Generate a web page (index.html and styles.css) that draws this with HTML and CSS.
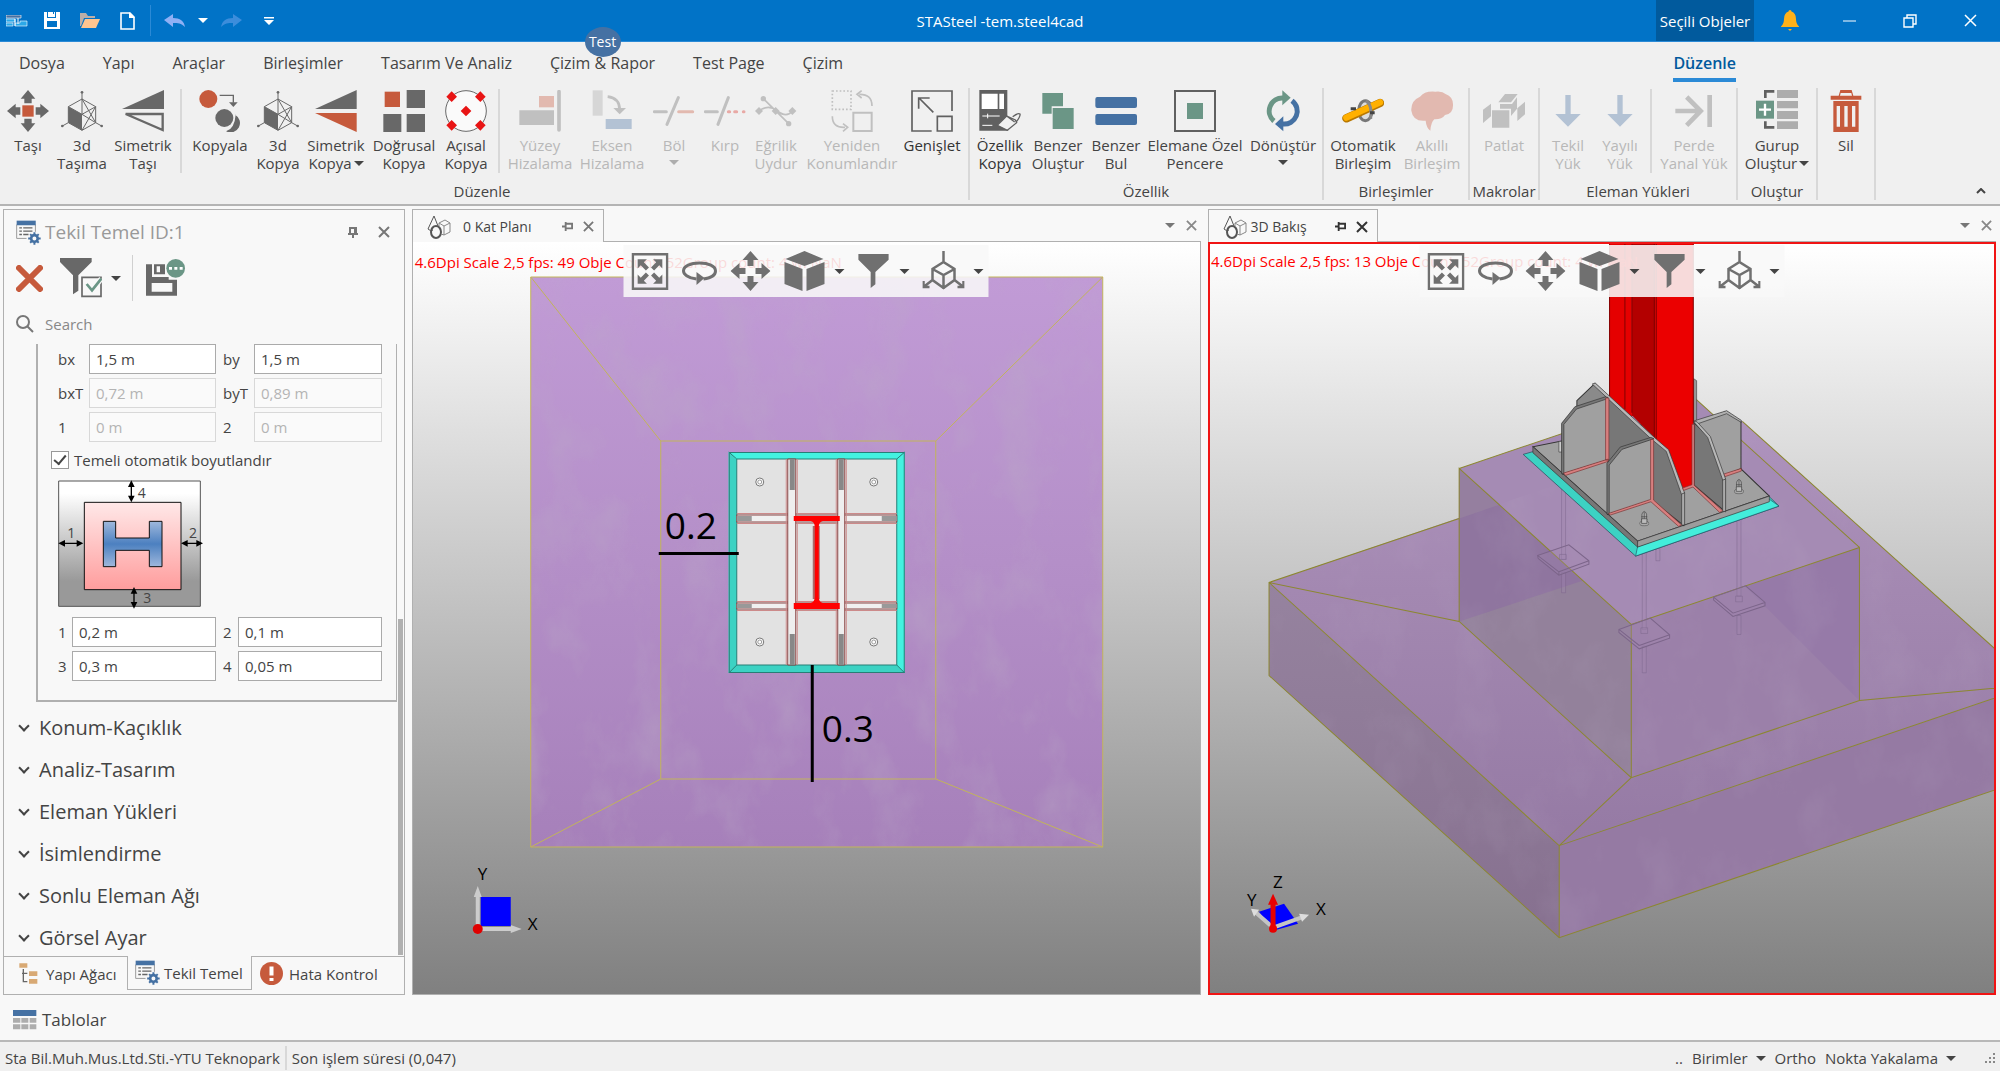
FILE: index.html
```html
<!DOCTYPE html>
<html lang="tr">
<head>
<meta charset="utf-8">
<title>STASteel -tem.steel4cad</title>
<link rel="stylesheet" href="styles.css">
</head>
<body>
<svg class="defs" aria-hidden="true">
  <defs>
    <symbol id="cube3d" viewBox="185 270 126 126">
      <g fill="none" stroke="#686868" stroke-width="3"><path d="M248 278V343M248 297l41 23v48l-41 23-41-23v-48zM207 320l41 23 41-23M248 343l41 25M289 320l-41 71M248 297l41 71M207 368l-18 10M289 368l18 10"/></g>
      <path d="M207 320l41 23v48l-41-23z" fill="#686868"/><g fill="#686868"><circle cx="248" cy="277" r="4"/><circle cx="189" cy="378" r="4"/><circle cx="307" cy="378" r="4"/></g>
    </symbol>
    <symbol id="x" viewBox="0 0 12 12"><path d="M1 1l10 10M11 1L1 11" fill="none" stroke="currentColor" stroke-width="2"/></symbol>
    <symbol id="pinside" viewBox="0 0 12 12"><path d="M0 6h4M4 1v10M4 3h7v5H4M4 8h8" fill="none" stroke="currentColor" stroke-width="2"/></symbol>
    <symbol id="shapes" viewBox="0 0 24 24"><g fill="none" stroke="#555"><path d="M7 1L1 14q3 3 5 1M7 1l4 10"/><ellipse cx="9" cy="17" rx="5" ry="6" stroke-width="2"/><path d="M12 8l6-3 5 3v9l-6 3-3-1M12 8l5 3v9M17 11l6-3M12 8v3" stroke="#888"/></g></symbol>
    <symbol id="sheetgear" viewBox="46 40 76 76">
      <path d="M48 54v42h30M105 54v22" fill="none" stroke="#999" stroke-width="3"/><path d="M48 42h58v14H48z" fill="#4571a3"/>
      <path d="M56 64h8m4 0h28M56 74h8m4 0h28M56 84h8m4 0h16" stroke="#666" stroke-width="4"/>
      <circle cx="102" cy="96" r="10" fill="none" stroke="#4571a3" stroke-width="8"/><path d="M102 77v8m0 22v8M83 96h8m22 0h8M89 83l6 6m14 14l6 6M115 83l-6 6m-14 14l-6 6" stroke="#4571a3" stroke-width="6"/>
    </symbol>
    <symbol id="fit" viewBox="0 0 36 36"><path d="M1 1h34v34H1z" fill="none" stroke="currentColor" stroke-width="3"/><path id="fa" d="M6 6h9l-3 3 5 5-3 3-5-5-3 3z" fill="currentColor"/><use href="#fa" transform="matrix(-1 0 0 1 36 0)"/><use href="#fa" transform="matrix(1 0 0 -1 0 36)"/><use href="#fa" transform="matrix(-1 0 0 -1 36 36)"/></symbol>
    <symbol id="orbit" viewBox="0 0 36 36"><path d="M15 26C6 25 2 21 2 18c0-5 7-8 16-8s16 3 16 8c0 4-5 7-12 8" fill="none" stroke="currentColor" stroke-width="3"/><path d="M15 19l8 6-8 7z" fill="currentColor"/></symbol>
    <symbol id="pan" viewBox="0 0 40 40"><path d="M20 0l8 9h-5v6h-6V9h-5zM20 40l8-9h-5v-6h-6v6h-5zM0 20l9-8v5h6v6H9v5zM40 20l-9-8v5h-6v6h6v5z" fill="currentColor"/></symbol>
    <symbol id="cube" viewBox="0 0 42 42"><path d="M21 1l19 8-19 7L2 9zM1 12l18 7v22L1 34zM41 12l-18 7v22l18-7z" fill="currentColor"/></symbol>
    <symbol id="funnel" viewBox="0 0 36 36"><path d="M2 0h32v6L20 19v13l-5 4V19L2 6z" fill="currentColor"/></symbol>
    <symbol id="axes" viewBox="0 0 42 40"><path d="M21 0v11l11 7v11l-11 8-11-8V18l11-7M10 18l11 6 11-6M21 24v14M10 29l-9 7M1 30v6h6M32 29l9 7M41 30v6h-6" fill="none" stroke="currentColor" stroke-width="2.500"/></symbol>
    <symbol id="bolt" viewBox="0 0 30 50"><path d="M8 12q7-16 14 0v22H8z" fill="#aaa" stroke="#444" stroke-width="2"/><path d="M6 20h18M6 28h18M15 6v28" stroke="#444" stroke-width="2"/><ellipse cx="15" cy="40" rx="14" ry="7" fill="#aaa" stroke="#555" stroke-width="2"/><path d="M7 26h16v14H7z" fill="#bbb" stroke="#444" stroke-width="2"/></symbol>
    <filter id="concrete" x="0" y="0" width="1" height="1"><feTurbulence type="fractalNoise" baseFrequency="0.022 0.014" numOctaves="5" seed="8"/><feColorMatrix values="0 0 0 0 .5  0 0 0 0 .42  0 0 0 0 .56  0 0 0 1.300 -.6"/><feComposite in2="SourceGraphic" operator="in"/></filter>
  </defs>
</svg>

<header class="titlebar">
  <nav class="quick" aria-label="Hızlı erişim">
    <svg width="22" height="12" viewBox="0 0 22 12"><path d="M0 0h15v3H0z" fill="#4571a3" stroke="#fff" stroke-width=".6"/><path d="M0 4h9v3H0zM0 8h7v3H0zM14 6h7v5H9V8h5z" fill="#2ba8e8" stroke="#fff" stroke-width=".6"/><path d="M9 4v7M12 3v6" stroke="#fff"/></svg>
    <button class="q1" aria-label="Kaydet"><svg width="16" height="17" viewBox="0 0 16 17"><path d="M0 0h3v6h9V0h4v17H0zM4 0h5v2h1V0h1v5H4zM3 9v6h10V9z" fill="#fff" fill-rule="evenodd"/></svg></button>
    <button class="q2" aria-label="Aç"><svg width="20" height="15" viewBox="0 0 20 15"><path d="M0 0h6l2 3h7v2H4L1 13H0z" fill="#bbaea8"/><path d="M5 6h15l-4 9H1z" fill="#ffc590"/></svg></button>
    <button class="q2" aria-label="Yeni"><svg width="15" height="18" viewBox="0 0 15 18"><path d="M1 1h9l4 4v12H1z" fill="none" stroke="#fff" stroke-width="1.600"/><path d="M9 0v6h6z" fill="#fff"/></svg></button>
    <i class="qsep"></i>
    <button class="q3" aria-label="Geri al"><svg width="21" height="14" viewBox="0 0 21 14"><path d="M0 6l9-6v4c7 0 11 3 12 9-4-4-7-4-12-4v4z" fill="#8fb0f5"/></svg></button>
    <i class="caret light"></i>
    <button class="q4" aria-label="Yinele"><svg width="21" height="14" viewBox="0 0 21 14"><path d="M21 6L12 0v4C5 4 1 7 0 13c4-4 7-4 12-4v4z" fill="#3c8ddb"/></svg></button>
    <button aria-label="Özelleştir"><svg width="10" height="8" viewBox="0 0 10 8"><path d="M0 0h10v1.500H0zM0 3h10L5 8z" fill="#fff"/></svg></button>
  </nav>
  <h1 class="apptitle">STASteel -tem.steel4cad</h1>
  <div class="winctl">
    <span class="context">Seçili Objeler</span>
    <button class="bell" aria-label="Bildirimler"><svg width="18" height="21" viewBox="0 0 18 21"><path d="M9 0q1.500 0 1.500 1.500Q15 3 15 9q0 5 3 7.500V17H0v-.5Q3 14 3 9q0-6 4.500-7.500Q7.500 0 9 0zM7 19h4l-2 2z" fill="#ffb11a"/></svg></button>
    <button aria-label="Küçült"><svg width="14" height="14"><path d="M0 7h13" stroke="#fff"/></svg></button>
    <button aria-label="Geri yükle"><svg width="14" height="14" fill="none" stroke="#fff" stroke-width="1.400"><path d="M1 4h9v9H1zM4 4V1h9v9h-3"/></svg></button>
    <button aria-label="Kapat"><svg width="13" height="13" fill="none" stroke="#fff" stroke-width="1.500"><path d="M1 1l11 11M12 1L1 12"/></svg></button>
  </div>
</header>

<nav class="menu">
  <a href="#">Dosya</a><a href="#">Yapı</a><a href="#">Araçlar</a><a href="#">Birleşimler</a><a href="#">Tasarım Ve Analiz</a>
  <a href="#" class="hasbadge">Çizim &amp; Rapor<span class="badge">Test</span></a><a href="#">Test Page</a><a href="#">Çizim</a>
  <a href="#" class="current">Düzenle</a>
</nav>

<section class="ribbon">
  <div class="group">
    <div class="tools">
      <button class="tool w54"><svg viewBox="23 270 126 126"><path d="M86 270l22 26H97v14H75v-14H64zM86 396l22-26H97v-14H75v14H64zM23 333l26-22v11h14v22H49v11zM149 333l-26-22v11h-14v22h14v11z" fill="#686868"/><path d="M69 316h34v34H69z" fill="#c65a3c"/></svg>Taşı</button>
      <button class="tool w54"><svg><use href="#cube3d"/></svg>3d<br>Taşıma</button>
      <button class="tool w68"><svg viewBox="369 270 126 126"><path d="M495 270v57H369z" fill="#686868"/><path d="M380 342h111v48z" fill="none" stroke="#686868" stroke-width="7"/></svg>Simetrik<br>Taşı</button>
      <i class="split"></i>
      <button class="tool w70"><svg viewBox="600 270 126 126"><circle cx="628" cy="297" r="27" fill="#c65a3c"/><path d="M662 286h41v22" fill="none" stroke="#686868" stroke-width="4"/><path d="M690 307h26l-13 14z" fill="#686868"/><circle cx="676" cy="354" r="27" fill="#686868"/><path d="M708 344a27 27 0 1 1-27 50q26-8 29-50z" fill="#686868"/></svg>Kopyala</button>
      <button class="tool w46"><svg><use href="#cube3d"/></svg>3d<br>Kopya</button>
      <button class="tool w70"><svg viewBox="950 270 126 126"><path d="M1075 270v57H950z" fill="#686868"/><path d="M1075 396v-57H950z" fill="#c65a3c"/></svg>Simetrik<br><span>Kopya<i class="caret"></i></span></button>
      <button class="tool w66"><svg viewBox="1154 270 126 126"><path d="M1159 275h46v46h-46z" fill="#c65a3c"/><path d="M1225 270h55v54h-55zM1155 342h54v54h-54zM1225 342h55v54h-55z" fill="#686868"/></svg>Doğrusal<br>Kopya</button>
      <button class="tool w58"><svg viewBox="1338 270 126 126"><circle cx="1401" cy="333" r="61" fill="#fafafa" stroke="#686868" stroke-width="3"/><path d="M1401 317l16 16-16 16-16-16zM1358 274l16 16-16 16-16-16zM1444 274l16 16-16 16-16-16zM1358 360l16 16-16 16-16-16zM1444 360l16 16-16 16-16-16z" fill="#e81414"/></svg>Açısal<br>Kopya</button>
      <i class="split"></i>
      <button class="tool w74" disabled><svg viewBox="93 270 126 126"><path d="M153 288h45v34h-45z" fill="#e2b9af"/><path d="M94 331h104v44H94z" fill="#c0c0c0"/><path d="M213 275v115" stroke="#c0c0c0" stroke-width="11" stroke-linecap="round"/></svg>Yüzey<br>Hizalama</button>
      <button class="tool w70" disabled><svg viewBox="307 270 126 126"><path d="M312 271h30v76h-30z" fill="#d6d6d6"/><path d="M351 357h78v30h-78z" fill="#b3c2d4"/><path d="M357 290q36 4 36 40" fill="none" stroke="#c0c0c0" stroke-width="8"/><path d="M374 324h38l-19 19z" fill="#c0c0c0"/></svg>Eksen<br>Hizalama</button>
      <button class="tool w54" disabled><svg viewBox="495 270 126 126" stroke-linecap="round" stroke-width="9"><path d="M499 335h36M537 373l34-80" stroke="#c0c0c0"/><path d="M572 335h42" stroke="#e2b9af"/></svg>Böl<br><i class="caret below"></i></button>
      <button class="tool w48" disabled><svg viewBox="648 270 126 126" stroke-linecap="round" stroke-width="9"><path d="M652 335h36M690 373l31-80" stroke="#c0c0c0"/><path d="M721 335h4m15 0h6m20 0h2" stroke="#e8a9a5"/></svg>Kırp</button>
      <button class="tool w54" disabled><svg viewBox="800 270 126 126"><path d="M812 333q28-22 55 0 28 22 45 0M825 296l76 75" fill="none" stroke="#c0c0c0" stroke-width="5"/><path d="M812 321l12 12-12 12-12-12zM912 321l12 12-12 12-12-12zM862 321l12 12-12 12-12-12z" fill="#c0c0c0"/><circle cx="825" cy="296" r="8" fill="#c0c0c0"/><circle cx="901" cy="371" r="8" fill="#c0c0c0"/></svg>Eğrilik<br>Uydur</button>
      <button class="tool w98" disabled><svg viewBox="1022 270 126 126" fill="none" stroke="#c0c0c0"><path d="M1026 273h56v55h-56z" stroke-width="5" stroke-dasharray="5 6"/><path d="M1089 338h55v55h-55z" stroke-width="6"/><path d="M1145 318q0-36-38-35M1114 272l-14 11 14 11M1026 349q0 35 38 33M1058 371l14 11-14 12" stroke-width="5"/></svg>Yeniden<br>Konumlandır</button>
      <button class="tool w62 strong"><svg viewBox="1266 270 126 126" fill="none" stroke="#606060" stroke-width="5"><path d="M1328 393h-59V273h120v60M1345 349h44v44h-44zM1333 337l-43-43M1289 326v-32h33"/></svg>Genişlet</button>
    </div>
    <h2>Düzenle</h2>
  </div>
  <div class="group">
    <div class="tools">
      <button class="tool w54 strong"><svg viewBox="29 270 126 126"><path d="M30 270h84v80l-22 24 26 18H30z" fill="#606060"/><path d="M37 281h48v46H37zM90 281h14v46H90z" fill="#fff"/><path d="M39 348h52M55 341v14M39 376h30" stroke="#fff" stroke-width="3"/><path d="M84 376l28-28 26 12 4 8-28 23zM112 348l24 18M130 350q16-12 22-8 2 6-10 22" fill="#f0f0f0" stroke="#606060" stroke-width="4"/></svg>Özellik<br>Kopya</button>
      <button class="tool w62"><svg viewBox="201 270 126 126"><path d="M217 279h62v40h-34v22h-28zM248 324h63v63h-63z" fill="#6b9686"/></svg>Benzer<br>Oluştur</button>
      <button class="tool w54"><svg viewBox="374 270 126 126" fill="#4571a3"><rect x="375" y="291" width="125" height="33" rx="6"/><rect x="375" y="342" width="125" height="33" rx="6"/></svg>Benzer<br>Bul</button>
      <button class="tool w104"><svg viewBox="612 270 126 126"><path d="M615 273h120v120H615z" fill="none" stroke="#606060" stroke-width="6"/><path d="M651 309h48v48h-48z" fill="#6b9686"/></svg>Elemane Özel<br>Pencere</button>
      <button class="tool w72"><svg viewBox="875 270 126 126" fill="none" stroke-width="15"><path d="M911 363a39 39 0 0 1 28-69" stroke="#6b9686"/><path d="M936 271l25 22-25 23z" fill="#6b9686" stroke="none"/><path d="M965 302a39 39 0 0 1-28 70" stroke="#4571a3"/><path d="M939 349l-25 23 25 22z" fill="#4571a3" stroke="none"/></svg>Dönüştür<br><i class="caret below"></i></button>
    </div>
    <h2>Özellik</h2>
  </div>
  <div class="group">
    <div class="tools">
      <button class="tool w72"><svg viewBox="1118 270 126 126"><ellipse cx="1188" cy="332" rx="20" ry="30" fill="#ddd" stroke="#777" stroke-width="9"/><path d="M1131 355l101-46" stroke="#b97800" stroke-width="25" stroke-linecap="round"/><path d="M1131 353l101-46" stroke="#ffb000" stroke-width="19" stroke-linecap="round"/><path d="M1190 302q20 14 14 54" fill="none" stroke="#888" stroke-width="9"/><path d="M1144 326h16M1202 338h14" stroke="#444" stroke-width="9"/></svg>Otomatik<br>Birleşim</button>
      <button class="tool w66" disabled><svg viewBox="1323 270 126 126"><path d="M1324 332q-2-30 26-42 14-18 46-15 20-3 32 8 22 8 21 34 0 24-24 28-10 14-32 13-10 8-12 34-12-8-14-30-38 4-43-30z" fill="#e2b9b0"/></svg>Akıllı<br>Birleşim</button>
    </div>
    <h2>Birleşimler</h2>
  </div>
  <div class="group">
    <div class="tools">
      <button class="tool w62" disabled><svg viewBox="6 270 126 126" fill="#c0c0c0"><path d="M33 331h52v52H33zM52 307l20-25h38l-20 25zM57 312h36l15-20v34l-18 22V326H57zM6 329l24-18v38l-24 20zM109 325l23-20v38l-23 20z"/></svg>Patlat</button>
    </div>
    <h2>Makrolar</h2>
  </div>
  <div class="group">
    <div class="tools">
      <button class="tool w50" disabled><svg viewBox="199 270 126 126"><path d="M254 285h16v57h30l-38 38-38-38h30z" fill="#b3c2d4"/></svg>Tekil<br>Yük</button>
      <button class="tool w54" disabled><svg viewBox="352 270 126 126"><path d="M407 285h16v57h30l-38 38-38-38h30z" fill="#b3c2d4"/></svg>Yayılı<br>Yük</button>
      <i class="split"></i>
      <button class="tool w78" disabled><svg viewBox="581 270 126 126" fill="none" stroke="#c0c0c0" stroke-width="14"><path d="M588 333h74M622 291l42 42-42 43M691 285v96"/></svg>Perde<br>Yanal Yük</button>
    </div>
    <h2>Eleman Yükleri</h2>
  </div>
  <div class="group">
    <div class="tools">
      <button class="tool w72"><svg viewBox="828 270 126 126"><path d="M883 274h-27v20M856 364v18h27" fill="none" stroke="#606060" stroke-width="8"/><path d="M891 270h63v24h-63zM891 303h63v22h-63zM891 333h63v24h-63zM891 364h63v23h-63z" fill="#adadad"/><path d="M828 302h54v54h-54z" fill="#6b9686"/><path d="M837 329h36M855 311v36" stroke="#fff" stroke-width="7"/></svg>Gurup<br><span>Oluştur<i class="caret"></i></span></button>
    </div>
    <h2>Oluştur</h2>
  </div>
  <div class="group">
    <div class="tools">
      <button class="tool w50"><svg viewBox="1036 270 126 126"><path d="M1053 287h24l5-17h34l5 17h24v12h-92zM1061 303h76v93h-76zM1083 279l-2 8h36l-2-8zM1071 318v62h10v-62zM1094 318v62h10v-62zM1117 318v62h10v-62z" fill="#c65a3c" fill-rule="evenodd"/></svg>Sil</button>
    </div>
  </div>
  <button class="collapse" aria-label="Şeridi daralt"><svg width="10" height="6"><path d="M1 5l4-4 4 4" fill="none" stroke="#444" stroke-width="2"/></svg></button>
</section>

<main class="dock">
  <aside class="props">
    <div class="phead">
      <svg width="25" height="25"><use href="#sheetgear"/></svg><h2>Tekil Temel ID:1</h2>
      <button aria-label="Sabitle"><svg width="10" height="11" viewBox="0 0 10 11" fill="none" stroke="#777" stroke-width="2"><path d="M2 0v7M2 1h6v6M7 1v6M0 7h10M5 7v4"/></svg></button>
      <button aria-label="Kapat"><svg width="12" height="12"><use href="#x"/></svg></button>
    </div>
    <div class="ptools">
      <button aria-label="İptal"><svg width="27" height="27" viewBox="0 0 27 27"><path d="M3 3l21 21M24 3L3 24" stroke="#c65a3c" stroke-width="6" stroke-linecap="round"/></svg></button>
      <button class="pf" aria-label="Filtre"><svg width="42" height="40" viewBox="180 162 126 120"><path d="M180 162h95v12l-40 40v46l-16 11v-57l-39-40z" fill="#686868"/><path d="M246 220h57v57h-57z" fill="#f8f8f8" stroke="#686868" stroke-width="5"/><path d="M260 240l16 19 28-35" fill="none" stroke="#f8f8f8" stroke-width="16"/><path d="M260 240l16 19 28-35" fill="none" stroke="#6b9686" stroke-width="8"/></svg><i class="caret"></i></button>
      <i class="psep"></i>
      <button aria-label="Farklı kaydet"><svg width="39" height="38" viewBox="438 162 117 114"><path d="M438 178h18v38h50v8h25v48h-93zM455 234v26h62v-26z" fill="#686868" fill-rule="evenodd"/><path d="M462 178h33v30h-33zM470 184v18h10v-18z" fill="#686868" fill-rule="evenodd"/><circle cx="527" cy="190" r="28" fill="#6b9686"/><path d="M507 190h9m7 0h9m7 0h9" stroke="#fff" stroke-width="8"/></svg></button>
    </div>
    <label class="search"><svg width="18" height="18" viewBox="0 0 18 18" fill="none" stroke="#777" stroke-width="2"><circle cx="7" cy="7" r="6"/><path d="M11 11l6 6"/></svg><input type="search" placeholder="Search"></label>
    <div class="pscroll">
      <div class="box">
        <div class="form wide">
          <label for="bx">bx</label><input id="bx" value="1,5 m"><label for="by">by</label><input id="by" value="1,5 m">
          <label for="bxt">bxT</label><input id="bxt" value="0,72 m" disabled><label for="byt">byT</label><input id="byt" value="0,89 m" disabled>
          <label for="o1">1</label><input id="o1" value="0 m" disabled><label for="o2">2</label><input id="o2" value="0 m" disabled>
        </div>
        <label class="check"><input type="checkbox" checked>Temeli otomatik boyutlandır</label>
        <svg class="sketch" width="146" height="130" viewBox="174 825 438 390">
          <defs><linearGradient id="g1" x1="0" y1="0" x2="0" y2="1"><stop offset=".1" stop-color="#fff"/><stop offset=".8" stop-color="#999"/></linearGradient><linearGradient id="g2" x1="0" y1="0" x2="0" y2="1"><stop offset="0" stop-color="#ffe8e8"/><stop offset="1" stop-color="#ff9d9d"/></linearGradient><linearGradient id="g3" x1="0" y1="0" x2="0" y2="1"><stop offset="0" stop-color="#9fb8dc"/><stop offset=".5" stop-color="#4c80c0"/><stop offset="1" stop-color="#9fb8dc"/></linearGradient></defs>
          <path d="M176 828h425v376H176z" fill="url(#g1)" stroke="#555" stroke-width="3"/><path d="M253 892h290v262H253z" fill="url(#g2)" stroke="#111" stroke-width="3"/>
          <path d="M310 949h37v50h101v-50h38v136h-38v-49H347v49h-37z" fill="url(#g3)" stroke="#111" stroke-width="3"/>
          <path d="M394 835v50M402 1155v48M185 1015h55M550 1015h50" stroke="#000" stroke-width="4"/><path d="M394 826l10 20h-20zM394 892l10-20h-20zM402 1146l10 20h-20zM402 1211l10-20h-20zM175 1015l20-10v20zM250 1015l-20-10v20zM543 1015l20-10v20zM609 1015l-20-10v20z"/>
          <g class="mark"><text x="202" y="998">1</text><text x="567" y="998">2</text><text x="413" y="880">4</text><text x="430" y="1193">3</text></g>
        </svg>
        <div class="form">
          <label for="d1">1</label><input id="d1" value="0,2 m"><label for="d2">2</label><input id="d2" value="0,1 m">
          <label for="d3">3</label><input id="d3" value="0,3 m"><label for="d4">4</label><input id="d4" value="0,05 m">
        </div>
      </div>
      <div class="sections">
        <button><i class="chev"></i>Konum-Kaçıklık</button><button><i class="chev"></i>Analiz-Tasarım</button><button><i class="chev"></i>Eleman Yükleri</button><button><i class="chev"></i>İsimlendirme</button><button><i class="chev"></i>Sonlu Eleman Ağı</button><button><i class="chev"></i>Görsel Ayar</button>
      </div>
      <i class="thumb"></i>
    </div>
    <div class="ptabs">
      <a href="#" class="pt1"><svg width="19" height="21" viewBox="56 818 57 63"><path d="M57 819h24v13H57zM86 843h25v14H86zM86 866h25v14H86z" fill="#d8a974"/><path d="M69 836v38h12M65 849h16" fill="none" stroke="#666" stroke-width="4"/></svg>Yapı Ağacı</a>
      <a href="#" class="pt2"><svg width="25" height="25"><use href="#sheetgear"/></svg>Tekil Temel</a>
      <a href="#" class="pt3"><svg width="23" height="23" viewBox="0 0 23 23"><circle cx="11.500" cy="11.500" r="11.500" fill="#c65a3c"/><path d="M11.500 4.500v9M11.500 16v3" stroke="#fff" stroke-width="4"/></svg>Hata Kontrol</a>
    </div>
  </aside>

  <section class="view">
    <div class="vhead">
      <div class="vtab plan"><svg width="24" height="24"><use href="#shapes"/></svg><span>0 Kat Planı</span><svg class="pin" width="11" height="11"><use href="#pinside"/></svg><svg width="11" height="11"><use href="#x"/></svg></div>
      <div class="vend"><i class="caret"></i><svg width="11" height="11"><use href="#x"/></svg></div>
    </div>
    <div class="canvas">
      <svg class="scene" viewBox="413 242 787 752" preserveAspectRatio="xMidYMid slice">
        <defs><linearGradient id="pl" x1="0" y1="0" x2="0" y2="1"><stop offset="0" stop-color="#c19bd6"/><stop offset=".5" stop-color="#b48fc8"/><stop offset="1" stop-color="#a680ba"/></linearGradient></defs>
        <path d="M531 277h572v570H531z" fill="url(#pl)"/><path d="M531 277h572v570H531z" filter="url(#concrete)" opacity=".6"/>
        <path d="M531 277h572v570H531zM661 441h275v338H661zM531 277l130 164M1103 277L936 441M531 847l130-68M1103 847l-167-68" fill="none" stroke="#c2b45a" stroke-width="1"/>
        <path d="M729 452h176v221H729z" fill="#43f2e0"/><path d="M729 452l8 8v205h160l8 8H729z" fill="#3cd2c3"/>
        <path d="M737 459h160v206H737z" fill="#e2e2e2"/>
        <path d="M729.500 452.500h175v220h-175zM737 459h160v206H737zM729 452l8 7M905 452l-8 7M729 673l8-8M905 673l-8-8" fill="none" stroke="#277e76"/>
        <path d="M737 515h160v7H737zM737 603h160v6H737z" fill="#f0f0f0" stroke="#844"/><path d="M737 513.500h160M737 523.500h160M737 601.500h160M737 610.500h160" stroke="#cc8a8a"/>
        <path d="M788 459h8v206h-8zM838 459h7v206h-7z" fill="#eee" stroke="#844"/><path d="M797.500 459v206M836.500 459v206M846.500 459v206M786.500 459v206" stroke="#cc8a8a"/>
        <path d="M790 459h5v31h-5zM839 459h5v31h-5zM790 634h5v31h-5zM839 634h5v31h-5z" fill="#888"/><path d="M737 516h15v5h-15zM882 516h15v5h-15zM737 604h15v4h-15zM882 604h15v4h-15z" fill="#999"/>
        <path d="M813 526h7v73h-7z" fill="#a86a6a"/><path d="M794 516h46v5h-17q-4 1-4 6v70q0 5 4 6h17v6h-46v-6h17q4-1 4-6v-70q0-5-4-6h-17z" fill="#f00"/>
        <g fill="#fff" stroke="#777"><circle cx="760" cy="482" r="4"/><circle cx="874" cy="482" r="4"/><circle cx="760" cy="642" r="4"/><circle cx="874" cy="642" r="4"/></g><g fill="none" stroke="#999"><circle cx="760" cy="482" r="2"/><circle cx="874" cy="482" r="2"/><circle cx="760" cy="642" r="2"/><circle cx="874" cy="642" r="2"/></g>
        <path d="M659 553.500h80M812.500 665v117" stroke="#000" stroke-width="3"/>
        <g class="dim"><text x="665" y="539">0.2</text><text x="822" y="742">0.3</text></g>
        <path d="M478 929v-33M478 929h34" stroke="#ccc" stroke-width="4"/><path d="M478 886l4 11h-8zM522 929l-11-4v8z" fill="#ccc"/><path d="M481 897h30v29h-30z" fill="#00f"/><circle cx="478" cy="929" r="5" fill="#e00000"/>
        <g class="axis"><text x="478" y="880">Y</text><text x="528" y="930">X</text></g>
        <text class="fps" x="415" y="268">4.6Dpi Scale 2,5 fps: 49 Obje Count: 52Group count: 4 w: NaN</text>
      </svg>
      <div class="float">
        <button aria-label="Sığdır"><svg width="37" height="37"><use href="#fit"/></svg></button>
        <button aria-label="Döndür"><svg width="36" height="36"><use href="#orbit"/></svg></button>
        <button aria-label="Kaydır"><svg width="40" height="40"><use href="#pan"/></svg></button>
        <button aria-label="Görünüm"><svg width="42" height="42"><use href="#cube"/></svg><i class="caret"></i></button>
        <button aria-label="Filtre"><svg width="34" height="36"><use href="#funnel"/></svg><i class="caret"></i></button>
        <button aria-label="Eksen"><svg width="42" height="40"><use href="#axes"/></svg><i class="caret"></i></button>
      </div>
    </div>
  </section>

  <section class="view active">
    <div class="vhead">
      <div class="vtab solid"><svg width="24" height="24"><use href="#shapes"/></svg><span>3D Bakış</span><svg class="pin" width="11" height="11"><use href="#pinside"/></svg><svg width="12" height="12"><use href="#x"/></svg></div>
      <div class="vend"><i class="caret"></i><svg width="11" height="11"><use href="#x"/></svg></div>
    </div>
    <div class="canvas">
      <svg class="scene" viewBox="1210 244 784 750" preserveAspectRatio="xMidYMid slice">
        <defs>
          <linearGradient id="s1" x1="0" y1="0" x2="0" y2="1"><stop offset="0" stop-color="#ae93bd"/><stop offset=".4" stop-color="#a388b1"/><stop offset="1" stop-color="#957aa4"/></linearGradient>
          <linearGradient id="s2" x1="0" y1="0" x2="0" y2="1"><stop offset="0" stop-color="#96839f"/><stop offset="1" stop-color="#86708f"/></linearGradient>
        </defs>
        <path d="M1269 583l473-161 292 263-475 161z" fill="url(#s1)"/>
        <path d="M1269 583v93l290 262v-92z" fill="url(#s2)"/>
        <path d="M1559 846v92l475-161v-92z" fill="#957aa3"/>
        <path d="M1459 469v153l172 156 228-78V548L1631 625z" fill="#9b80a9"/>
        <path d="M1459 469v153l172 156V625z" fill="#93819b"/>
        <path d="M1459 469v153l124-41v-24z" fill="#8f759f"/>
        <path d="M1859 548v153L1745 587z" fill="#967aa8"/>
        <path d="M1687 392l172 156-228 77-172-156z" fill="#a58bb4"/>
        <path d="M1459 519l41-14-41-36z" fill="#957f9f"/>
        <path d="M1269 583l473-161 292 263v92l-475 161-290-262z" filter="url(#concrete)" opacity=".25"/>
        <path d="M1459 519l-190 64v93l290 262 475-161M1269 583l290 263v92M1559 846l475-161-292-263M1269 583l190 39 172 156 228-77 175-16M1631 778l-72 68M1459 622V469l172 156v153M1631 625l228-77v153M1859 548l-172-156-228 77" fill="none" stroke="#8c8730"/>
        <!-- base plate, stiffeners and anchors, drawn three times larger -->
        <g transform="translate(1500 360) scale(.3333)">
          <g fill="#a388b1" fill-opacity=".3" stroke="#7c658a" stroke-opacity=".7" stroke-width="2">
            <path d="M184 340h12v260h-12zM184 640h12v60h-12zM426 570h12v240h-12zM426 860h12v80h-12zM710 480h12v230h-12zM710 768h12v57h-12zM467 560h12v44h-12z"/>
            <path d="M112 588l94-32 60 48v10l-90 33-62-50zM176 637l90-33M176 637v10M112 588l64 49M356 810l94-34 58 50v10l-91 32-61-49zM417 858l91-32M356 810l61 48M640 713l96-34 58 50v10l-96 32-58-49zM698 761l96-32M640 713l58 48" stroke-opacity="1" stroke-width="3"/>
            <path d="M178 585h20v15h-20zM422 805h20v17h-20zM706 710h20v17h-20z"/>
          </g>
          <path d="M69 285l28-8 315 272 394-138 30 29-430 150z" fill="#3cd2c3" stroke="#245" stroke-width="2"/><path d="M412 562l396-142 28 20-430 150z" fill="#43eddb" stroke="#256" stroke-width="2"/>
          <path d="M98 262l314 283 395-135-250-240z" fill="#a0a0a0" stroke="#333" stroke-width="3"/><path d="M98 262v18l314 283v-18z" fill="#777" stroke="#333" stroke-width="2"/><path d="M412 545v18l395-136v-17z" fill="#9c9c9c" stroke="#333" stroke-width="2"/>
          <path d="M176 246h10v32h-10z" fill="#ccc" stroke="#444" stroke-width="2"/>
          <path d="M580 58l9 6v160h-9z" fill="#999" stroke="#444" stroke-width="2"/>
          <path d="M590 188l88-32 44 30v142l-52 20-80-60z" fill="#a0a0a0" stroke="#333" stroke-width="3"/><path d="M580 185l99-31 44 29v6l-44-26-89 31z" fill="#b0b0b0" stroke="#333" stroke-width="2"/><path d="M670 344l53-17v8l-50 17z" fill="#d87f7f" stroke="#733" stroke-width="2"/>
          <path d="M327-380h68v600l-68-110z" fill="#e50000"/><path d="M395-380h72v620l-72-72z" fill="#b30000"/><path d="M465-380h114v760l-32 10-82-150z" fill="#eb0000"/><path d="M328-380v490M374-380v530M395-380v540M462-380v612M468-380v618M579-380v570" fill="none" stroke="#800000" stroke-width="3"/>
          <path d="M230 124l54-52 40 38-20 10-74 24z" fill="#8a8a8a" stroke="#333" stroke-width="3"/>
          <path d="M284 72l170 166 50 36 46 130v94L455 423 320 305V112z" fill="#777" stroke="#333" stroke-width="3"/>
          <path d="M276 74l9-3 176 162 44 38 48 130-9 5-46-130-46-38z" fill="#b8b8b8" stroke="#333" stroke-width="2"/><path d="M544 404l9-4v97h-9z" fill="#aaa" stroke="#333" stroke-width="2"/>
          <path d="M187 192l38-47 96-31v188l-134 42z" fill="#a0a0a0" stroke="#333" stroke-width="3"/><path d="M184 192l40-50 92-30 9 5-96 32-38 46v148h-7z" fill="#777" stroke="#333" stroke-width="2"/><path d="M316 116h10v186h-10zM190 341l134-42v7l-128 42z" fill="#d87f7f" stroke="#733" stroke-width="2"/>
          <path d="M322 316l40-49 92-29v184l-132 43z" fill="#a0a0a0" stroke="#333" stroke-width="3"/><path d="M320 312l40-49 92-29 9 4-96 32-38 47v147h-7z" fill="#777" stroke="#333" stroke-width="2"/><path d="M451 240h9v182l84 75-9 4-83-74-122 40-5-5 126-42z" fill="#d87f7f" stroke="#733" stroke-width="2"/>
          <path d="M583 192l45 42 46 130v92L582 378z" fill="#777" stroke="#333" stroke-width="3"/><path d="M580 187l10 0 40 44 46 128-8 5-46-130z" fill="#b8b8b8" stroke="#333" stroke-width="2"/><path d="M667 362l9-3v97h-9z" fill="#aaa" stroke="#333" stroke-width="2"/>
          <path d="M575 195h7v183l85 76-9 5-80-76-28 10-3-7 28-10z" fill="#d87f7f" stroke="#733" stroke-width="2"/>
          <use href="#bolt" x="417" y="452" width="30" height="50"/><use href="#bolt" x="701" y="356" width="30" height="50"/>
        </g>
        <path d="M1259 912l25-8 14 20-25 7z" fill="#00f"/><path d="M1256 913l17 15 28-10" fill="none" stroke="#c4c4c4" stroke-width="4"/><path d="M1251 909l8 1-5 7zM1309 915l-10-1 3 8z" fill="#ddd"/><path d="M1273 903v27" stroke="#e80000" stroke-width="5"/><path d="M1273 894l5 11h-10z" fill="#e80000"/><circle cx="1273" cy="929" r="4" fill="#e80000"/>
        <g class="axis"><text x="1273" y="888">Z</text><text x="1247" y="906">Y</text><text x="1316" y="915">X</text></g>
        <text class="fps" x="1211" y="268">4.6Dpi Scale 2,5 fps: 13 Obje Count: 52Group count: 4 w: NaN</text>
      </svg>
      <div class="float">
        <button aria-label="Sığdır"><svg width="37" height="37"><use href="#fit"/></svg></button>
        <button aria-label="Döndür"><svg width="36" height="36"><use href="#orbit"/></svg></button>
        <button aria-label="Kaydır"><svg width="40" height="40"><use href="#pan"/></svg></button>
        <button aria-label="Görünüm"><svg width="42" height="42"><use href="#cube"/></svg><i class="caret"></i></button>
        <button aria-label="Filtre"><svg width="34" height="36"><use href="#funnel"/></svg><i class="caret"></i></button>
        <button aria-label="Eksen"><svg width="42" height="40"><use href="#axes"/></svg><i class="caret"></i></button>
      </div>
    </div>
  </section>
</main>

<div class="tables"><a href="#"><svg width="24" height="20" viewBox="39 960 72 60"><path d="M39 960h70v18H39z" fill="#4571a3"/><path d="M39 984h22v14H39zM64 984h21v14H64zM89 984h20v14H89zM39 1003h22v15H39zM64 1003h21v15H64zM89 1003h20v15H89z" fill="#adadad"/></svg>Tablolar</a></div>

<footer class="status">
  <span>Sta Bil.Muh.Mus.Ltd.Sti.-YTU Teknopark</span><i class="ssep"></i><span>Son işlem süresi (0,047)</span>
  <div class="sright"><span>..</span><button>Birimler<i class="caret"></i></button><button>Ortho</button><button>Nokta Yakalama<i class="caret"></i></button>
  <svg width="14" height="14" fill="#888"><path d="M10 0h2v2h-2zM6 4h2v2H6zM10 4h2v2h-2zM2 8h2v2H2zM6 8h2v2H6zM10 8h2v2h-2z"/></svg></div>
</footer>
</body>
</html>
```
FILE: styles.css
```css
* { box-sizing: border-box; }
body { margin: 0; min-height: 100vh; display: flex; flex-direction: column; background: #f8f8f8; color: #444; font: 15px/18px "Open Sans", "Noto Sans", sans-serif; }
button { margin: 0; padding: 0; border: 0; background: none; color: inherit; font: inherit; display: flex; align-items: center; justify-content: center; }
a { color: inherit; text-decoration: none; }
svg { display: block; flex: none; }
h1, h2 { margin: 0; font-weight: 400; }
.defs { position: absolute; width: 0; height: 0; }
.caret { display: inline-block; flex: none; width: 0; height: 0; border: 5px solid transparent; border-top-color: #444; border-bottom: 0; }
.caret.light { border-top-color: #fff; }

.titlebar { height: 42px; background: #0173c7; border-bottom: 1px solid #2b8ad6; color: #fff; display: grid; grid-template-columns: 1fr auto 1fr; align-items: center; }
.quick { display: flex; align-items: center; padding-left: 6px; height: 41px; }
.q1 { margin-left: 16px; }
.q2 { margin-left: 20px; }
.q3 { margin: 0 13px; }
.q4 { margin: 0 22px 0 13px; }
.qsep { width: 1px; height: 31px; margin-left: 15px; background: #2b8ad6; }
.apptitle { font-size: 15px; }
.winctl { display: flex; justify-content: flex-end; height: 41px; }
.winctl button { width: 60px; }
.winctl .bell { width: 66px; padding-left: 6px; }
.context { width: 98px; background: #015a9d; display: grid; place-items: center; }

.menu { height: 46px; background: #f0f0f0; display: flex; align-items: flex-start; gap: 38px; padding: 10px 264px 0 19px; font-size: 16px; line-height: 22px; }
.menu a { position: relative; white-space: nowrap; }
.menu .current { margin-left: auto; color: #015a9d; font-weight: 600; height: 30px; border-bottom: 4px solid #2b8ad6; }
.badge { position: absolute; left: 50%; top: -25px; width: 36px; height: 30px; margin-left: -18px; border-radius: 50%; background: #4571a3; color: #fff; font-size: 14px; line-height: 30px; text-align: center; }

.ribbon { height: 118px; background: #f0f0f0; border-bottom: 2px solid #b4b4b4; display: flex; }
.group { height: 112px; border-right: 2px solid #d8d8d8; padding: 0 3px; display: flex; flex-direction: column; }
.group:first-child { padding: 0 5px 0 1px; }
.group h2 { margin: 0 -3px; font-size: 15px; line-height: 18px; text-align: center; }
.tools { display: flex; justify-content: center; height: 94px; }
.tool { display: block; text-align: center; white-space: nowrap; padding-top: 2px; align-self: flex-start; font-size: 15px; line-height: 18px; }
.tool svg { width: 42px; height: 42px; margin: 0 auto 4px; }
.tool .caret { vertical-align: 3px; margin-left: 2px; }
.tool .below { vertical-align: 4px; margin: 0; }
.tool:disabled { color: #b8b8b8; }
.tool:disabled .caret { border-top-color: #adadad; }
.strong { color: #333; }
.split { width: 2px; height: 84px; margin: 1px 3px 0; background: #d8d8d8; }
.w46 { width: 46px; } .w48 { width: 48px; } .w50 { width: 50px; } .w54 { width: 54px; } .w58 { width: 58px; }
.w62 { width: 62px; } .w66 { width: 66px; } .w68 { width: 68px; } .w70 { width: 70px; } .w72 { width: 72px; } .w74 { width: 74px; } .w78 { width: 78px; }
.w98 { width: 98px; } .w104 { width: 104px; }
.collapse { margin: auto 14px 10px auto; }

.dock { flex: 1; display: grid; grid-template-columns: 402px minmax(0, 1fr) minmax(0, 1fr); gap: 7px; padding: 3px 4px 0 3px; }
.props { border: 1px solid #b0b0b0; display: flex; flex-direction: column; }
.phead { display: flex; align-items: center; height: 42px; padding: 2px 14px 0 12px; color: #777; }
.phead h2 { font-size: 19px; line-height: 24px; color: #999; margin-left: 4px; margin-right: auto; }
.phead button + button { margin-left: 20px; }
.ptools { display: flex; align-items: center; height: 49px; padding: 3px 0 0 12px; }
.pf { margin-left: 17px; gap: 9px; }
.psep { width: 1px; height: 46px; margin: 0 13px 0 11px; background: #d0d0d0; }
.search { display: flex; align-items: center; height: 43px; padding: 3px 12px 0; gap: 11px; }
.search input { border: 0; background: none; font: inherit; padding: 0; outline: 0; }
.search input::placeholder { color: #888; opacity: 1; }
.pscroll { position: relative; flex: 1; }
.box { margin: 0 7px 0 32px; padding: 0 13px 19px; border: 2px solid #b0b0b0; border-width: 0 1px 2px 2px; }
.form { display: grid; grid-template-columns: 14px 144px 22px 144px; row-gap: 4px; padding-left: 7px; align-items: center; }
.form label:nth-child(4n+3) { padding-left: 7px; }
.form.wide { grid-template-columns: 31px 127px 38px 128px; }
.form input { min-width: 0; height: 30px; border: 1px solid #aaa; background: #fff; color: #444; font: inherit; padding: 0 6px; }
.form input:disabled { border-color: #d8d8d8; background: #fafafa; color: #b4b4b4; }
.check { display: flex; align-items: center; gap: 5px; height: 36px; }
.check input { appearance: none; width: 18px; height: 18px; margin: 0; border: 1px solid #999; background: #fff; display: grid; place-items: center; }
.check input:checked::before { content: ""; width: 10px; height: 5px; border: solid #444; border-width: 0 0 2px 2px; transform: translateY(-2px) rotate(-50deg); }
.sketch { margin: 2px 0 7px 7px; }
.mark { font-size: 42px; fill: #444; }
.sections { padding: 5px 0 0 16px; margin-bottom: -4px; }
.sections button { height: 42px; justify-content: flex-start; gap: 11px; font-size: 20px; line-height: 24px; }
.chev { width: 8px; height: 8px; border: solid #444; border-width: 0 2px 2px 0; transform: translateY(-2px) rotate(45deg); }
.thumb { position: absolute; right: 1px; top: 275px; bottom: 1px; width: 5px; background: #b0b0b0; }
.ptabs { display: flex; height: 38px; }
.ptabs a { display: flex; align-items: center; height: 34px; border: 1px solid #b0b0b0; border-width: 1px 0 0; white-space: nowrap; }
.ptabs .pt1 { width: 123px; padding-left: 15px; gap: 8px; }
.ptabs .pt2 { width: 125px; padding-left: 7px; gap: 4px; border-width: 0 1px 1px; }
.ptabs .pt3 { flex: 1; padding-left: 8px; gap: 6px; }

.view { display: flex; flex-direction: column; min-width: 0; }
.vhead { display: flex; height: 33px; }
.vtab { display: flex; align-items: center; border: 1px solid #b0b0b0; border-bottom: 0; padding: 1px 0 0 14px; color: #777; }
.vtab span { color: #444; font-size: 14px; }
.vtab .pin { margin-right: 10px; margin-left: auto; }
.plan { width: 192px; padding-right: 9px; }
.plan span { margin-left: 12px; }
.solid { width: 170px; padding-right: 9px; color: #333; }
.solid span { margin-left: 4px; }
.vend { flex: 1; border-bottom: 1px solid #b0b0b0; display: flex; justify-content: flex-end; align-items: center; gap: 11px; padding: 1px 4px 0 0; color: #888; }
.vend .caret { border-top-color: #777; }
.canvas { position: relative; flex: 1; border: 1px solid #b0b0b0; border-top: 0; background: linear-gradient(#fff, #808080); }
.active .canvas { border: 2px solid #f01414; }
.scene { position: absolute; inset: 0; width: 100%; height: 100%; }
.scene .dim { font-size: 37px; fill: #000; }
.scene .axis { font-size: 17px; fill: #000; }
.scene .fps { font-size: 15px; fill: #f00; }
.float { position: absolute; top: 3px; left: 50%; transform: translateX(-50%); height: 52px; width: 365px; padding: 0 5px 0 8px; background: rgba(248, 248, 248, .88); color: #707070; display: flex; align-items: center; justify-content: space-between; }
.active .float { top: 1px; }
.float button { gap: 9px; }
.float .caret { border-top-color: #444; }

.tables { height: 45px; display: flex; align-items: center; padding: 4px 0 0 13px; font-size: 17px; line-height: 22px; }
.tables a { display: flex; align-items: center; gap: 5px; }
.status { height: 31px; background: #f0f0f0; border-top: 2px solid #b8b8b8; display: flex; align-items: center; padding: 3px 3px 0 5px; font-size: 15px; }
.ssep { width: 2px; height: 24px; margin: 0 5px; background: #d8d8d8; }
.sright { margin-left: auto; display: flex; align-items: center; gap: 9px; }
.sright button { gap: 8px; }
.sright svg { margin-left: 18px; align-self: flex-end; }
```
